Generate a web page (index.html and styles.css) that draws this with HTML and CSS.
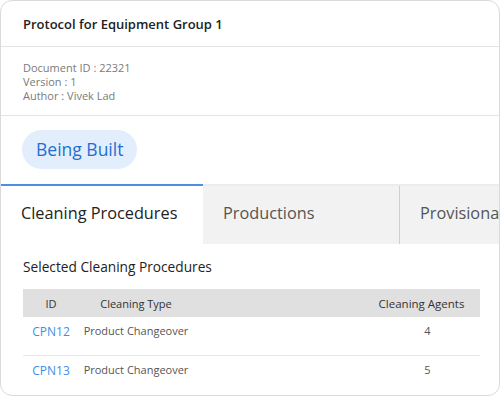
FILE: index.html
```html
<!DOCTYPE html>
<html lang="en">
<head>
    <meta charset="UTF-8">
    <meta name="viewport" content="width=device-width, initial-scale=1.0">
    <title>Protocol for Equipment Group 1</title>
    <link rel="stylesheet" href="styles.css">
</head>
<body>
    <main class="card">
        <!-- Header -->
        <header class="card-header">
            <h1 class="card-title">Protocol for Equipment Group 1</h1>
        </header>

        <!-- Document meta -->
        <section class="doc-meta">
            <div>Document ID : 22321</div>
            <div>Version : 1</div>
            <div>Author : Vivek Lad</div>
        </section>

        <div class="status-row">
            <span class="status-chip">Being Built</span>
        </div>

        <!-- Tabs -->
        <nav class="tabs" role="tablist">
            <div class="tab active" role="tab">Cleaning Procedures</div>
            <div class="tab" role="tab">Productions</div>
            <div class="tab" role="tab">Provisional Release</div>
        </nav>

        <!-- Tab content -->
        <section class="tab-panel">
            <h2 class="panel-title">Selected Cleaning Procedures</h2>
            <table class="proc-table">
                <thead>
                    <tr>
                        <th class="col-id">ID</th>
                        <th class="col-type">Cleaning Type</th>
                        <th class="col-fill"></th>
                        <th class="col-agents">Cleaning Agents</th>
                    </tr>
                </thead>
                <tbody>
                    <tr>
                        <td class="col-id"><a href="#">CPN12</a></td>
                        <td class="col-type">Product Changeover</td>
                        <td class="col-fill"></td>
                        <td class="col-agents">4</td>
                    </tr>
                    <tr>
                        <td class="col-id"><a href="#">CPN13</a></td>
                        <td class="col-type">Product Changeover</td>
                        <td class="col-fill"></td>
                        <td class="col-agents">5</td>
                    </tr>
                </tbody>
            </table>
        </section>
    </main>
</body>
</html>
```

FILE: styles.css
```css
:root {
    --border: #e4e4e4;
    --text: #222;
    --muted: #7a7a7a;
    --blue: #1f6fd0;
    --link: #3d8fe6;
}

* {
    box-sizing: border-box;
}

body {
    margin: 0;
    font-family: "Open Sans", "Noto Sans", sans-serif;
    background: #fff;
    color: var(--text);
}

.card {
    width: 500px;
    height: 396px;
    background: #fff;
    border: 1px solid #dadada;
    border-radius: 12px;
    overflow: hidden;
}

.card-header {
    height: 46px;
    padding: 0 22px;
    display: flex;
    align-items: center;
    border-bottom: 1px solid var(--border);
}

.card-title {
    margin: 0;
    font-size: 13px;
    font-weight: 600;
}

.doc-meta {
    height: 69px;
    padding: 14px 22px 0;
    font-size: 11px;
    line-height: 14px;
    color: var(--muted);
    border-bottom: 1px solid var(--border);
}

.status-row {
    height: 68px;
    padding: 14px 21px 0;
}

.status-chip {
    display: inline-block;
    height: 39px;
    line-height: 38px;
    padding: 0 14px;
    border-radius: 20px;
    background: #e3eefc;
    color: var(--blue);
    font-size: 17.5px;
}

.tabs {
    display: flex;
    height: 60px;
    border-top: 2px solid #ececec;
    white-space: nowrap;
}

.tab {
    flex: none;
    display: flex;
    align-items: center;
    padding: 0 20px 4px;
    font-size: 16.3px;
    color: #555;
    background: #f2f2f2;
}

.tab:nth-child(1) {
    width: 202px;
}

.tab:nth-child(2) {
    width: 197px;
    border-right: 1px solid #cfcfcf;
}

.tab.active {
    background: #fff;
    color: var(--text);
    border-top: 2px solid #4a8fe0;
    margin-top: -2px;
}

.tab-panel {
    padding: 13px 20px 0 22px;
}

.panel-title {
    margin: 0 0 13px;
    font-size: 13.7px;
    font-weight: 400;
    color: var(--text);
}

.proc-table {
    width: 457px;
    border-collapse: collapse;
    font-size: 11px;
    table-layout: fixed;
}

.proc-table th {
    height: 28px;
    padding: 0;
    background: #e0e0e0;
    font-weight: 400;
    color: #333;
}

.proc-table th.col-agents {
    font-size: 11.5px;
}

.proc-table td {
    height: 38px;
    padding: 6px 0 0;
    color: #555;
    vertical-align: top;
}

.proc-table tbody tr + tr td {
    border-top: 1px solid #e6e6e6;
    padding-top: 6px;
}

.proc-table a {
    color: var(--link);
    text-decoration: none;
    font-size: 12px;
}

.col-id {
    width: 56px;
    text-align: center;
}

.col-type {
    width: 114px;
    text-align: center;
}

.col-agents {
    width: 117px;
    text-align: center;
}

.proc-table td.col-agents {
    padding-left: 12px;
}
```
